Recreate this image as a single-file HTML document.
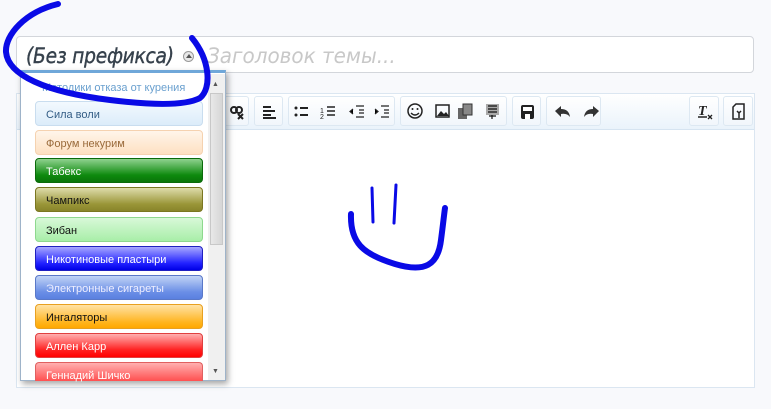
<!DOCTYPE html><html><head><meta charset="utf-8"><style>
body{margin:0;width:771px;height:409px;background:#f8f9fc;font-family:"Liberation Sans","DejaVu Sans",sans-serif;position:relative;overflow:hidden}
.title{position:absolute;left:16px;top:36px;width:738px;height:37px;background:#fff;border:1px solid #d3d6db;border-radius:4px;box-sizing:border-box}
.pre{position:absolute;left:26px;top:44px;font-size:21px;font-style:italic;color:#36414c;font-family:"DejaVu Sans",sans-serif;letter-spacing:-0.3px;transform:scaleX(0.89);transform-origin:left;-webkit-text-stroke:0.4px #36414c}
.ph{position:absolute;left:207px;top:44px;font-size:21px;font-style:italic;color:#c8c8c8;font-family:"DejaVu Sans",sans-serif;transform:scaleX(0.95);transform-origin:left}
.arr{position:absolute;left:183px;top:51px;width:11px;height:11px;border-radius:50%;background:#e8e8e8;border:1px solid #999;box-sizing:border-box}
.arr:after{content:"";position:absolute;left:2px;top:2px;border:3px solid transparent;border-bottom:4px solid #555;border-top:0}
.ed{position:absolute;left:16px;top:93px;width:739px;height:295px;background:#fff;border:1px solid #dbe6f1;box-sizing:border-box}
.tb{position:absolute;left:0;top:0;right:0;height:35px;background:linear-gradient(#fff,#eaf3fb);border-bottom:1px solid #d6e4f1}
.g{position:absolute;top:2px;height:30px;border:1px solid #dde8f2;border-radius:3px;background:linear-gradient(#fff,#f1f6fb);box-sizing:border-box;white-space:nowrap}
.g svg{position:absolute;top:7px}
.dd{position:absolute;left:20px;top:70px;width:206px;height:311px;background:#fff;border:1px solid #9eb3c9;border-top:3px solid #6fa7d9;box-sizing:border-box;box-shadow:2px 3px 6px rgba(0,0,0,.35)}
.hd{position:absolute;left:42px;top:82px;font-size:11px;color:#6aa0cf}
.it{position:absolute;left:35px;width:168px;height:25px;border-radius:4px;box-sizing:border-box;font-size:11px;padding:7px 0 0 10px;border:1px solid}
.sb{position:absolute;left:208px;top:74px;width:17px;height:306px;background:#f0f0f0}
.th{position:absolute;left:210px;top:93px;width:13px;height:152px;background:linear-gradient(90deg,#e8e8e8,#d6d6d6);border:1px solid #c8c8c8;box-sizing:border-box}
</style></head><body>
<div class="title"></div>
<div class="pre">(Без префикса)</div><div class="arr"></div>
<div class="ph">Заголовок темы...</div>
<div class="ed"><div class="tb">
<div class="g" style="left:207px;width:25px"><svg width="16" height="16" style="left:4px"><circle cx="5" cy="6" r="3" stroke="#222" stroke-width="2" fill="none"/><circle cx="10" cy="6" r="3" stroke="#222" stroke-width="2" fill="none"/><path d="M9 10l5 5M14 10l-5 5" stroke="#222" stroke-width="2"/></svg></div>
<div class="g" style="left:237px;width:29px"><svg width="16" height="16" style="left:7px"><path d="M1 3h8M1 7h12M1 11h8M1 14h13" stroke="#222" stroke-width="2"/></svg></div>
<div class="g" style="left:271px;width:107px"><svg width="100" height="16" style="left:4px">
<g stroke="#222" stroke-width="2"><circle cx="3" cy="4" r="1.5" fill="#222" stroke="none"/><circle cx="3" cy="11" r="1.5" fill="#222" stroke="none"/><path d="M7 4h8M7 11h8"/>
<path d="M34 3h8M34 7h8M34 11h8" stroke-width="1.5"/>
<path d="M63 2h8M66 6h5M66 9h5M63 13h8M60 5l-3 2.5 3 2.5" stroke-width="1.2"/>
<path d="M88 2h8M91 6h5M91 9h5M88 13h8M82 5l3 2.5-3 2.5" stroke-width="1.2"/></g>
<text x="27" y="9" font-size="7" fill="#222">1</text><text x="27" y="15" font-size="7" fill="#222">2</text></svg></div>
<div class="g" style="left:383px;width:107px"><svg width="100" height="18" style="left:5px;top:6px">
<circle cx="9" cy="8" r="7" stroke="#222" stroke-width="1.5" fill="none"/><circle cx="6.5" cy="6" r="1" fill="#222"/><circle cx="11.5" cy="6" r="1" fill="#222"/><path d="M5 10q4 4 8 0" stroke="#222" stroke-width="1.3" fill="none"/>
<rect x="30" y="2" width="13" height="12" stroke="#222" stroke-width="1.5" fill="none"/><path d="M31 13l4-5 3 3 2-2 3 4z" fill="#222"/>
<rect x="52" y="5" width="9" height="11" fill="#666"/><rect x="57" y="1" width="9" height="11" fill="#888" stroke="#333"/>
<rect x="80" y="1" width="13" height="11" fill="#aaa"/><path d="M82 3h9M82 6h9M82 9h9M83 13h7M86 12v4" stroke="#111" stroke-width="1.2"/></svg></div>
<div class="g" style="left:495px;width:29px"><svg width="16" height="16" style="left:7px"><rect x="1" y="1" width="13" height="14" rx="2" fill="#222"/><rect x="3" y="3" width="9" height="4" fill="#fff"/><rect x="5" y="10" width="5" height="5" fill="#fff"/></svg></div>
<div class="g" style="left:529px;width:55px"><svg width="46" height="16" style="left:7px"><path d="M1 7l6-5v3q8 0 9 8q-3-4-9-3v3z" fill="#333"/><path d="M45 7l-6-5v3q-8 0-9 8q3-4 9-3v3z" fill="#333"/></svg></div>
<div class="g" style="left:672px;width:30px"><svg width="18" height="18" style="left:7px;top:6px"><text x="1" y="12" font-size="14" font-weight="bold" font-style="italic" fill="#222" font-family="Liberation Serif">T</text><path d="M1 14h9" stroke="#222" stroke-width="1.5"/><path d="M11 12l4 4M15 12l-4 4" stroke="#222" stroke-width="1.3"/></svg></div>
<div class="g" style="left:706px;width:30px"><svg width="16" height="18" style="left:8px;top:6px"><path d="M4 1h8v15H1V4z" stroke="#222" stroke-width="1.5" fill="none"/><path d="M7 9v6M5 8l2 2 2-2" stroke="#222" stroke-width="1.5" fill="none"/></svg></div>
</div></div>
<div class="dd"></div>
<div class="hd">Методики отказа от курения</div>
<div class="it" style="top:101px;background:linear-gradient(#f3f9fe,#dcecfa);border-color:#c9ddef;color:#335d85">Сила воли</div>
<div class="it" style="top:130px;background:linear-gradient(#fff5ea,#fde0c2);border-color:#f5d2b0;color:#9a6a3a">Форум некурим</div>
<div class="it" style="top:158px;background:linear-gradient(#8fd28f,#0e8a0e 70%,#0a740a);border-color:#0a6a0a;color:#fff">Табекс</div>
<div class="it" style="top:187px;background:linear-gradient(#dedcab,#9a9638 70%,#88842a);border-color:#7a7620;color:#111">Чампикс</div>
<div class="it" style="top:217px;background:linear-gradient(#d8f8d8,#a8eea8);border-color:#8ed88e;color:#111">Зибан</div>
<div class="it" style="top:246px;background:linear-gradient(#a8a8ff,#2222ff 70%,#0000e6);border-color:#2020c0;color:#fff">Никотиновые пластыри</div>
<div class="it" style="top:275px;background:linear-gradient(#c2d4f6,#6a8ee6 70%,#5a80e0);border-color:#5a78c8;color:#eef">Электронные сигареты</div>
<div class="it" style="top:304px;background:linear-gradient(#ffe2a6,#ffb41e 75%,#ffa800);border-color:#e8a020;color:#111">Ингаляторы</div>
<div class="it" style="top:333px;background:linear-gradient(#ffb0b0,#ff2020 70%,#f00);border-color:#e04040;color:#fff">Аллен Карр</div>
<div class="it" style="top:362px;height:19px;background:linear-gradient(#ffb0b0,#ff5050);border-color:#e06060;color:#fff;border-bottom:0;border-radius:4px 4px 0 0">Геннадий Шичко</div>
<div class="sb"></div><div class="th"></div>
<div style="position:absolute;left:212px;top:81px;font-size:7px;color:#555">▲</div>
<div style="position:absolute;left:212px;top:368px;font-size:7px;color:#555">▼</div>
<svg width="771" height="409" style="position:absolute;left:0;top:0" fill="none" stroke="#0a0ae6" stroke-linecap="round">
<path d="M58,4 C25,12 5,35 6,52 C8,75 45,92 110,100 C150,105 185,106 200,98 C212,88 210,60 192,38" stroke-width="6"/>
<path d="M372,188 L373,222 M396,185 L394,223" stroke-width="3"/>
<path d="M351,214 C350,242 362,254 395,264 C425,273 438,265 441,240 C443,225 444,215 445,208" stroke-width="6"/>
</svg>
</body></html>
